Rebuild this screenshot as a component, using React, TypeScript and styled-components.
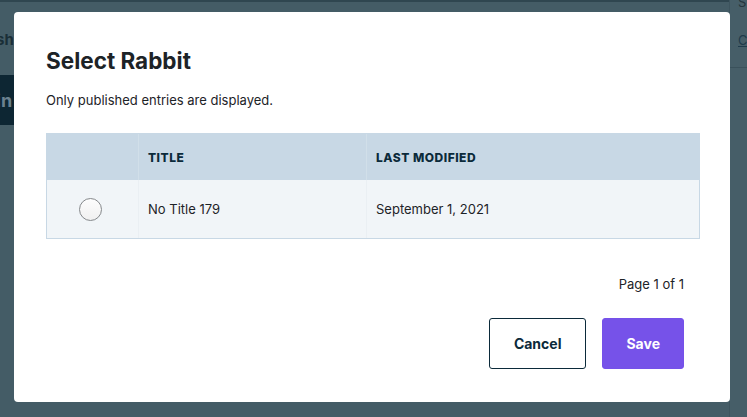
import React from "react";
import styled, { createGlobalStyle } from "styled-components";

const Global = createGlobalStyle`
  html, body { margin: 0; padding: 0; }
  body {
    width: 747px;
    height: 417px;
    overflow: hidden;
    background: #445c66;
    font-family: Inter, "Noto Sans", "Liberation Sans", sans-serif;
    -webkit-font-smoothing: antialiased;
  }
  * { box-sizing: border-box; }
`;

const Page = styled.div`
  position: relative;
  width: 747px;
  height: 417px;
  display: flex;
  background: #445c66;
`;

const Main = styled.div`
  flex: 1;
  display: flex;
  flex-direction: column;
  border-top: 2px solid #2f4650;
`;

const MainHeading = styled.div`
  height: 73px;
  padding: 28px 0 0 0;
  font-size: 15px;
  font-weight: 700;
  color: #1a2e37;
  margin-left: -4px;
`;

const DarkButton = styled.div`
  width: 40px;
  height: 50px;
  background: #0d2633;
  color: #6b8190;
  font-size: 18px;
  font-weight: 700;
  display: flex;
  align-items: center;
  margin-left: -4px;
`;

const Side = styled.div`
  width: 18px;
  border-left: 1px solid #3d545e;
  display: flex;
  flex-direction: column;
  background: #465e68;
`;

const SideTop = styled.div`
  height: 68px;
  border-bottom: 1px solid #3a515b;
  padding-left: 8px;
  font-size: 13px;
  color: #22353d;
  overflow: hidden;
`;

const SideLabel = styled.div`
  margin-top: -6px;
  height: 20px;
`;

const SideLink = styled.div`
  margin-top: 18px;
  text-decoration: underline;
  color: #1e3a4a;
`;

const Modal = styled.div`
  position: absolute;
  left: 14px;
  top: 12px;
  width: 716px;
  height: 390px;
  background: #ffffff;
  border-radius: 4px;
  padding: 34px 30px 0 32px;
  display: flex;
  flex-direction: column;
`;

const Title = styled.h2`
  margin: 0;
  font-size: 22.5px;
  line-height: 29px;
  font-weight: 700;
  color: #1d2327;
`;

const Subtitle = styled.p`
  margin: 16px 0 0 0;
  font-size: 13px;
  line-height: 18px;
  color: #1d2327;
`;

const Table = styled.div`
  margin-top: 24px;
  border: 1px solid #c8d8e5;
  display: grid;
  grid-template-columns: 91px 228px 1fr;
`;

const HeadCell = styled.div<{ $first?: boolean }>`
  height: 46px;
  background: #c8d8e5;
  display: flex;
  align-items: center;
  padding-left: 9px;
  font-size: 12px;
  font-weight: 800;
  letter-spacing: 0.5px;
  text-transform: uppercase;
  color: #0b2a3a;
  border-left: ${(p) => (p.$first ? "none" : "1px solid #d1dfe9")};
`;

const Cell = styled.div<{ $first?: boolean }>`
  height: 58px;
  background: #f1f5f8;
  display: flex;
  align-items: center;
  padding-left: ${(p) => (p.$first ? "32px" : "9px")};
  font-size: 13px;
  color: #1d2327;
  border-left: ${(p) => (p.$first ? "none" : "1px solid #eaeff3")};
`;

const Radio = styled.span`
  width: 23px;
  height: 23px;
  border-radius: 50%;
  border: 1.5px solid #86898c;
  background: linear-gradient(#fdfdfd, #f0f0f0);
`;

const Footer = styled.div`
  padding-right: 16px;
  display: flex;
  flex-direction: column;
  align-items: flex-end;
`;

const Pager = styled.div`
  margin-top: 36px;
  font-size: 13px;
  line-height: 18px;
  color: #1d2327;
`;

const Actions = styled.div`
  margin-top: 25px;
  display: flex;
  gap: 16px;
`;

const Button = styled.button<{ $primary?: boolean }>`
  height: 51px;
  padding: 0 ${(p) => (p.$primary ? "23px" : "24px")};
  border-radius: 3px;
  font-family: inherit;
  font-size: 14px;
  font-weight: 700;
  cursor: pointer;
  border: 1px solid ${(p) => (p.$primary ? "#7551e9" : "#0b2a3a")};
  background: ${(p) => (p.$primary ? "#7652e9" : "#ffffff")};
  color: ${(p) => (p.$primary ? "#ffffff" : "#0b2a3a")};
`;

export default function App() {
  return (
    <>
      <Global />
      <Page>
        <Main>
          <MainHeading>sh</MainHeading>
          <DarkButton>in</DarkButton>
        </Main>
        <Side>
          <SideTop>
            <SideLabel>S</SideLabel>
            <SideLink>C</SideLink>
          </SideTop>
        </Side>
        <Modal>
          <Title>Select Rabbit</Title>
          <Subtitle>Only published entries are displayed.</Subtitle>
          <Table>
            <HeadCell $first />
            <HeadCell>Title</HeadCell>
            <HeadCell>Last Modified</HeadCell>
            <Cell $first>
              <Radio />
            </Cell>
            <Cell>No Title 179</Cell>
            <Cell>September 1, 2021</Cell>
          </Table>
          <Footer>
            <Pager>Page 1 of 1</Pager>
            <Actions>
              <Button>Cancel</Button>
              <Button $primary>Save</Button>
            </Actions>
          </Footer>
        </Modal>
      </Page>
    </>
  );
}
